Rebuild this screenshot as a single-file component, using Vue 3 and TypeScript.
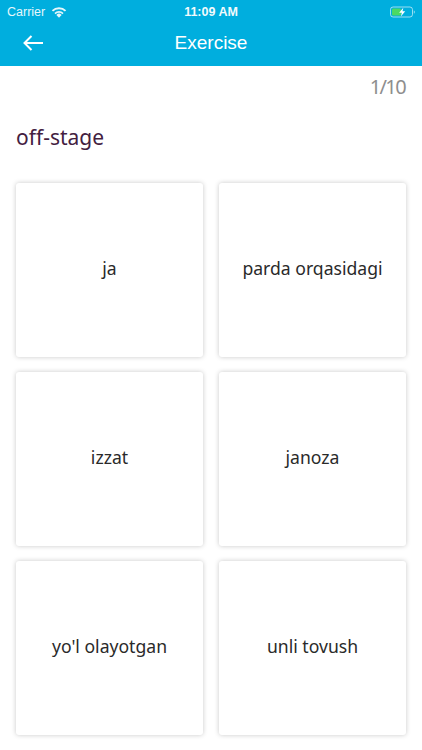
<script setup lang="ts">
const options: string[] = ['ja', 'parda orqasidagi', 'izzat', 'janoza', "yo'l olayotgan", 'unli tovush']
</script>

<template>
  <div class="screen">
    <header class="top">
      <div class="status">
        <div class="status-left">
          <span>Carrier</span>
          <svg class="wifi" width="16" height="12" viewBox="0 0 16 12">
            <path d="M8 11.8 5.4 8.9a3.6 3.6 0 0 1 5.2 0Z" fill="#fff" />
            <path d="M3.4 6.9a6.6 6.6 0 0 1 9.2 0l-1.2 1.3a4.9 4.9 0 0 0-6.8 0Z" fill="#fff" />
            <path d="M.8 4.2a10.2 10.2 0 0 1 14.4 0l-1.3 1.4a8.3 8.3 0 0 0-11.8 0Z" fill="#fff" />
          </svg>
        </div>
        <span class="time">11:09 AM</span>
        <svg class="battery" width="25" height="12" viewBox="0 0 25 12">
          <rect x="0.5" y="1" width="22" height="10" rx="2.6" fill="none" stroke="#fff" stroke-opacity="0.6" />
          <rect x="2" y="2.5" width="9" height="7" rx="1.2" fill="#4cd964" />
          <path d="M23.8 4.4c.7.2 1 .8 1 1.6s-.3 1.4-1 1.6Z" fill="#fff" fill-opacity="0.6" />
          <path d="M13.3 1.8 9.1 6.8h2.7l-.9 3.6 4.3-5.1h-2.7Z" fill="#fff" />
        </svg>
      </div>
      <nav class="nav">
        <svg class="back" width="20" height="16" viewBox="0 0 20 16">
          <path d="M20 8H2M8.5 1 1.5 8l7 7" fill="none" stroke="#fff" stroke-width="2" />
        </svg>
        <h1 class="title">Exercise</h1>
      </nav>
    </header>

    <main class="body">
      <div class="count">1/10</div>
      <div class="word">off-stage</div>
      <div class="grid">
        <div v-for="o in options" :key="o" class="card">{{ o }}</div>
      </div>
    </main>
  </div>
</template>

<style>
html, body { margin: 0; background: #fff; }
</style>

<style scoped>
.screen {
  width: 422px;
  height: 750px;
  overflow: hidden;
  background: #fff;
  font-family: "Noto Sans", "Noto Sans CJK KR", sans-serif;
}
.top {
  height: 66px;
  background: #00aede;
  color: #fff;
}
.status {
  height: 22px;
  box-sizing: border-box;
  padding: 1px 7px 0 7px;
  display: grid;
  grid-template-columns: 1fr auto 1fr;
  align-items: center;
  font-family: "Liberation Sans", sans-serif;
  font-size: 12.5px;
}
.status-left {
  display: flex;
  align-items: center;
  gap: 6px;
  opacity: 0.9;
}
.time {
  font-weight: 700;
  font-size: 12.5px;
  opacity: 0.95;
}
.battery {
  justify-self: end;
}
.nav {
  height: 41px;
  position: relative;
  display: flex;
  align-items: center;
  justify-content: center;
}
.back {
  position: absolute;
  left: 23px;
  top: 13px;
}
.title {
  margin: 0;
  font-family: "Liberation Sans", sans-serif;
  font-weight: 400;
  font-size: 19px;
}
.body {
  padding: 0 16px;
}
.count {
  text-align: right;
  color: #8e8e8e;
  font-size: 20px;
  line-height: 24px;
  padding-top: 9px;
  padding-right: 1px;
  letter-spacing: -1.6px;
}
.word {
  margin-top: 22px;
  color: #43203f;
  font-size: 21px;
  line-height: 32px;
}
.grid {
  margin-top: 30px;
  display: grid;
  grid-template-columns: 187px 187px;
  grid-auto-rows: 174px;
  column-gap: 16px;
  row-gap: 15px;
}
.card {
  display: flex;
  align-items: center;
  justify-content: center;
  padding-bottom: 4px;
  box-sizing: border-box;
  background: #fff;
  border-radius: 3px;
  box-shadow: 0 0 5px rgba(0, 0, 0, 0.22);
  color: #2a2a2a;
  font-size: 17.6px;
}
</style>
